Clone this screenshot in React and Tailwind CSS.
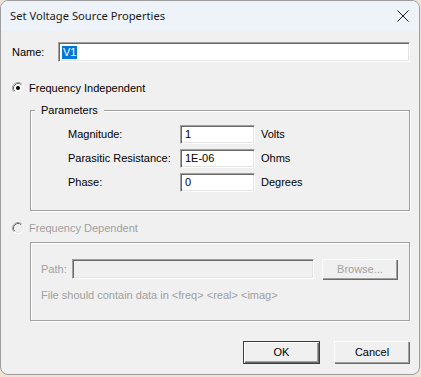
import { useState } from "react";

const Radio = ({ checked, disabled }) => (
  <svg width="12" height="12" viewBox="0 0 12 12" className="shrink-0">
    <circle cx="6" cy="6" r="5" fill={disabled ? "#f0f0f0" : "#ffffff"} />
    <path d="M2.11 9.89 A5.5 5.5 0 0 1 9.89 2.11" stroke="#a0a0a0" fill="none" />
    <path d="M9.89 2.11 A5.5 5.5 0 0 1 2.11 9.89" stroke="#ffffff" fill="none" />
    <path d="M2.82 9.18 A4.5 4.5 0 0 1 9.18 2.82" stroke="#696969" fill="none" />
    <path d="M9.18 2.82 A4.5 4.5 0 0 1 2.82 9.18" stroke="#e3e3e3" fill="none" />
    {checked && <circle cx="6" cy="6" r="2" fill="#000" />}
  </svg>
);

// sunken win32 edit box
const Edit = ({ value, className = "", disabled, selected }) => (
  <div
    className={
      "flex items-center border border-[#a0a0a0] border-b-white border-r-white shadow-[inset_1px_1px_0_#696969,inset_-1px_-1px_0_#e3e3e3] pl-[4px] " +
      (disabled ? "bg-[#f0f0f0] " : "bg-white ") +
      className
    }
  >
    {selected ? (
      <span className="bg-[#0078d7] text-white leading-[13px] px-[1px] -ml-[1px]">{value}</span>
    ) : (
      <span>{value}</span>
    )}
  </div>
);

const Button = ({ children, isDefault, disabled, className = "" }) => (
  <button
    className={
      "flex items-center justify-center bg-[#f0f0f0] " +
      (isDefault
        ? "border border-[#3c3c3c] shadow-[inset_1px_1px_0_#ffffff,inset_-1px_-1px_0_#696969,inset_-2px_-2px_0_#a0a0a0] "
        : "shadow-[inset_1px_1px_0_#ffffff,inset_-1px_-1px_0_#696969,inset_-2px_-2px_0_#a0a0a0] ") +
      (disabled ? "text-[#a0a0a0] " : "text-black ") +
      className
    }
  >
    {children}
  </button>
);

const ParamRow = ({ label, value, unit }) => (
  <div className="flex items-center h-[19px]">
    <span className="w-[112px]">{label}</span>
    <Edit value={value} className="w-[75px] h-[19px]" />
    <span className="ml-[6px]">{unit}</span>
  </div>
);

export default function App() {
  const [mode] = useState("independent");

  return (
    <div className="w-[421px] h-[377px] bg-[#efe3d6]">
      <div className="w-[420px] h-[375px] flex flex-col border border-[#9d9d9d] rounded-[8px] overflow-hidden bg-[#f0f0f0] font-['Liberation_Sans',Arial,sans-serif] text-[11px] text-black">
        {/* title bar */}
        <div className="h-[30px] shrink-0 flex items-center justify-between bg-[#eef3f9] pl-[9px] pr-[9px]">
          <span className="font-['Noto_Sans',sans-serif] text-[11.2px] text-[#1a1a1a] mt-[1px]">
            Set Voltage Source Properties
          </span>
          <svg width="12" height="12" viewBox="0 0 12 12" className="mr-[1px]">
            <path d="M0.5 0.5 L11.5 11.5 M11.5 0.5 L0.5 11.5" stroke="#1a1a1a" strokeWidth="1" />
          </svg>
        </div>

        {/* body */}
        <div className="flex flex-col pl-[11px] pr-[9px]">
          <div className="flex items-center h-[20px] mt-[11px]">
            <span className="w-[46px]">Name:</span>
            <Edit value="V1" selected className="flex-1 h-[20px]" />
          </div>

          <div className="flex items-center h-[14px] mt-[19px]">
            <Radio checked={mode === "independent"} />
            <span className="ml-[5px]">Frequency Independent</span>
          </div>

          <div className="relative ml-[18px] mt-[15px] h-[101px] border border-[#a0a0a0] shadow-[1px_1px_0_#ffffff,inset_1px_1px_0_#ffffff]">
            <span className="absolute -top-[7px] left-[4px] px-[6px] bg-[#f0f0f0] leading-[13px]">Parameters</span>
            <div className="flex flex-col gap-[5px] pl-[37px] pt-[14px]">
              <ParamRow label="Magnitude:" value="1" unit="Volts" />
              <ParamRow label="Parasitic Resistance:" value="1E-06" unit="Ohms" />
              <ParamRow label="Phase:" value="0" unit="Degrees" />
            </div>
          </div>

          <div className="flex items-center h-[14px] mt-[10px] text-[#a0a0a0]">
            <Radio checked={mode === "dependent"} disabled />
            <span className="ml-[5px]">Frequency Dependent</span>
          </div>

          <div className="ml-[18px] mt-[7px] h-[79px] border border-[#a0a0a0] shadow-[1px_1px_0_#ffffff,inset_1px_1px_0_#ffffff] text-[#a0a0a0] pl-[10px] pr-[11px] pt-[16px]">
            <div className="flex items-center h-[20px]">
              <span className="w-[31px]">Path:</span>
              <Edit value="" disabled className="w-[242px] h-[20px]" />
              <Button disabled className="ml-auto w-[76px] h-[21px]">Browse...</Button>
            </div>
            <div className="mt-[10px] leading-[13px]">File should contain data in &lt;freq&gt; &lt;real&gt; &lt;imag&gt;</div>
          </div>

          <div className="flex justify-end gap-[14px] mt-[20px]">
            <Button isDefault className="w-[77px] h-[23px]">OK</Button>
            <Button className="w-[76px] h-[23px]">Cancel</Button>
          </div>
        </div>
      </div>
    </div>
  );
}
